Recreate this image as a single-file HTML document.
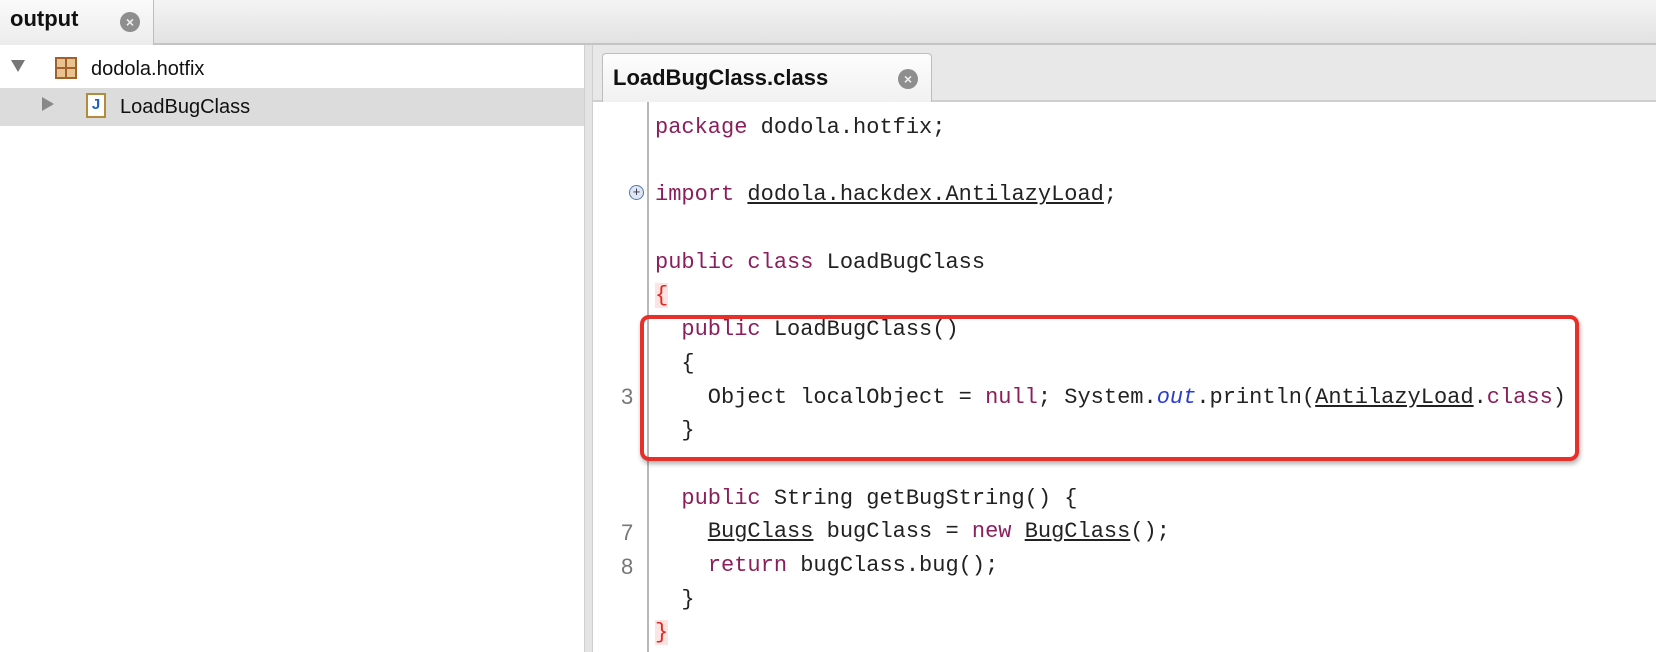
<!DOCTYPE html>
<html><head><meta charset="utf-8"><style>
*{margin:0;padding:0;box-sizing:border-box}
html,body{width:1656px;height:652px;overflow:hidden}
body{background:#fff;font-family:"Liberation Sans",sans-serif;position:relative}
.topbar{position:absolute;left:0;top:0;width:1656px;height:45px;background:linear-gradient(#f4f4f4,#e2e2e2);border-bottom:2px solid #c4c4c4}
.otab{position:absolute;left:0;top:0;width:154px;height:45px;background:linear-gradient(#fafafa,#ececec);border-right:1px solid #bdbdbd}
.otab span{position:absolute;left:10px;top:6px;font-size:22px;font-weight:bold;color:#111}
.x{position:absolute;width:20px;height:20px;border-radius:50%;background:#8e8e8e;color:#eee;font-size:14px;font-weight:bold;text-align:center;line-height:20px}
.left{position:absolute;left:0;top:45px;width:584px;height:607px;background:#fff}
.sel{position:absolute;left:0;top:43px;width:584px;height:38px;background:#dcdcdc}
.div{position:absolute;left:584px;top:45px;width:9px;height:607px;background:#e4e4e4;border-left:1px solid #cfcfcf;border-right:1px solid #cfcfcf}
.right{position:absolute;left:593px;top:45px;width:1063px;height:607px;background:#fff}
.tabarea{position:absolute;left:0;top:0;width:1063px;height:57px;background:#e8e8e8;border-bottom:2px solid #cfcfcf}
.etab{position:absolute;left:9px;top:8px;width:330px;height:49px;background:linear-gradient(#fdfdfd,#f1f1f1);border:1px solid #bdbdbd;border-bottom:none;border-radius:4px 4px 0 0}
.etab span{position:absolute;left:10px;top:11px;font-size:22px;font-weight:bold;color:#111}
.gut{position:absolute;left:647px;top:102px;width:2px;height:550px;background:#b8b8b8}
.code{position:absolute;left:655px;top:111px;font-family:"Liberation Mono",monospace;font-size:22px;color:#222}
.code div{height:33.7px;line-height:33.7px;white-space:pre}
.k{color:#8b1e5c}.u{text-decoration:underline}.i{color:#2a3bd0;font-style:italic}
.br{color:#e0281f;background:#fde4e4}
.ln{position:absolute;left:621px;font-family:"Liberation Sans",sans-serif;font-size:22px;color:#777}
.box{position:absolute;left:640px;top:315px;width:939px;height:146px;border:4px solid #e8302a;border-radius:9px;box-shadow:1px 3px 5px rgba(0,0,0,.3)}
</style></head><body>
<div class="topbar"><div class="otab"><span>output</span><div class="x" style="left:120px;top:12px">×</div></div></div>
<div class="left">
<div style="position:absolute;left:11px;top:15px;width:0;height:0;border-left:7px solid transparent;border-right:7px solid transparent;border-top:12px solid #777"></div>
<div style="position:absolute;left:55px;top:12px;width:22px;height:22px;background:#e9c38f;border:2px solid #a0612a"><div style="position:absolute;left:8px;top:0;width:2px;height:18px;background:#a0612a"></div><div style="position:absolute;left:0;top:8px;width:18px;height:2px;background:#a0612a"></div></div>
<div style="position:absolute;left:91px;top:13px;font-size:20px;color:#111">dodola.hotfix</div>
<div class="sel"></div>
<div style="position:absolute;left:42px;top:52px;width:0;height:0;border-top:7px solid transparent;border-bottom:7px solid transparent;border-left:12px solid #888"></div>
<div style="position:absolute;left:86px;top:48px;width:20px;height:25px;background:#fff;border:2px solid #b58a3a;color:#1f5fbf;font-weight:bold;font-size:15px;text-align:center;line-height:20px">J</div>
<div style="position:absolute;left:120px;top:51px;font-size:20px;color:#111">LoadBugClass</div>
</div>
<div class="div"></div>
<div class="right"><div class="tabarea"><div class="etab"><span>LoadBugClass.class</span><div class="x" style="left:295px;top:15px">×</div></div></div></div>
<div class="gut"></div>
<div style="position:absolute;left:629px;top:185px;width:15px;height:15px;border:1px solid #5577aa;border-radius:50%;background:#dde6f5;font-size:13px;line-height:12px;text-align:center;color:#334">+</div>
<div class="ln" style="top:384px">3</div>
<div class="ln" style="top:520px">7</div>
<div class="ln" style="top:554px">8</div>
<div class="code"><div><span class="k">package</span> dodola.hotfix;</div><div> </div><div><span class="k">import</span> <span class="u">dodola.hackdex.AntilazyLoad</span>;</div><div> </div><div><span class="k">public class</span> LoadBugClass</div><div><span class="br">{</span></div><div>  <span class="k">public</span> LoadBugClass()</div><div>  {</div><div>    Object localObject = <span class="k">null</span>; System.<span class="i">out</span>.println(<span class="u">AntilazyLoad</span>.<span class="k">class</span>)</div><div>  }</div><div> </div><div>  <span class="k">public</span> String getBugString() {</div><div>    <span class="u">BugClass</span> bugClass = <span class="k">new</span> <span class="u">BugClass</span>();</div><div>    <span class="k">return</span> bugClass.bug();</div><div>  }</div><div><span class="br">}</span></div></div>
<div class="box"></div>
</body></html>
